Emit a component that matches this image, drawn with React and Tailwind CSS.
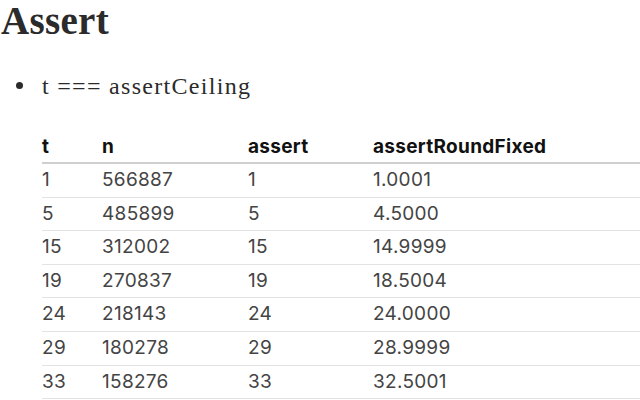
import React from "react";

const rows = [
  ["1", "566887", "1", "1.0001"],
  ["5", "485899", "5", "4.5000"],
  ["15", "312002", "15", "14.9999"],
  ["19", "270837", "19", "18.5004"],
  ["24", "218143", "24", "24.0000"],
  ["29", "180278", "29", "28.9999"],
  ["33", "158276", "33", "32.5001"],
];

const App = () => {
  return (
    <div className="w-[640px] h-[400px] overflow-hidden bg-white">
      <h1 className="pl-[1px] pt-[1px] font-['Liberation_Serif',serif] font-bold text-[39px] leading-[40px] tracking-[0.3px] text-[#2b2b2b]">
        Assert
      </h1>
      <ul className="mt-[29px] font-['Liberation_Serif',serif] text-[24px] leading-[32px] tracking-[1.3px] text-[#2b2b2b]">
        <li className="flex items-center">
          <span className="ml-[16px] mr-[19px] mt-[-2px] w-[7px] h-[7px] rounded-full bg-[#2b2b2b]" />
          t === assertCeiling
        </li>
      </ul>
      <div className="mt-[28px] pl-[42px]">
        <table className="w-full table-fixed border-collapse font-['Inter',sans-serif] text-[19px] tracking-[0.3px] text-left">
          <colgroup>
            <col className="w-[60px]" />
            <col className="w-[146px]" />
            <col className="w-[125px]" />
            <col />
          </colgroup>
          <thead>
            <tr className="border-b-2 border-[#cfcfcf] text-[#111]">
              <th className="h-[33px] p-0 pt-[2px] font-bold">t</th>
              <th className="h-[33px] p-0 pt-[2px] font-bold">n</th>
              <th className="h-[33px] p-0 pt-[2px] font-bold">assert</th>
              <th className="h-[33px] p-0 pt-[2px] font-bold">assertRoundFixed</th>
            </tr>
          </thead>
          <tbody className="text-[#444]">
            {rows.map((r, i) => (
              <tr key={i} className="border-b border-[#e3e3e3]">
                {r.map((c, j) => (
                  <td key={j} className="p-0 py-[3px] leading-[26.6px]">
                    {c}
                  </td>
                ))}
              </tr>
            ))}
          </tbody>
        </table>
      </div>
    </div>
  );
};

export default App;
